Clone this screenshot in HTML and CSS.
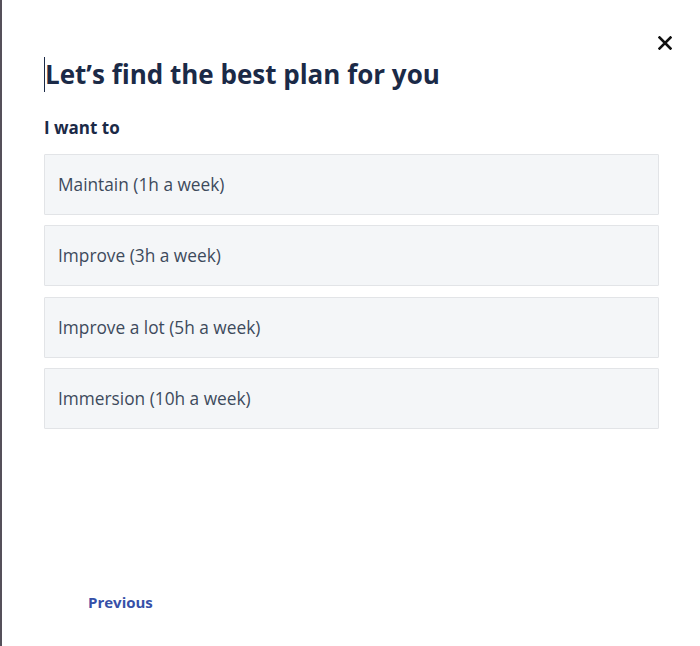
FILE: index.html
```html
<!DOCTYPE html>
<html lang="en">
<head>
  <meta charset="UTF-8" />
  <meta name="viewport" content="width=device-width, initial-scale=1.0" />
  <title>Find a plan</title>
  <link rel="stylesheet" href="styles.css">
</head>
<body>
  <div class="modal">
    <button class="close-btn" aria-label="Close">
      <svg width="14" height="14" viewBox="0 0 14 14">
        <path d="M1.5 1.5 L12.5 12.5 M12.5 1.5 L1.5 12.5" stroke="#111" stroke-width="2.6" stroke-linecap="square" />
      </svg>
    </button>

    <h1 class="title"><span class="caret"></span>Let’s find the best plan for you</h1>

    <div class="question">I want to</div>

    <div class="options">
      <button class="option">Maintain (1h a week)</button>
      <button class="option">Improve (3h a week)</button>
      <button class="option">Improve a lot (5h a week)</button>
      <button class="option">Immersion (10h a week)</button>
    </div>

    <div class="footer">
      <a href="#" class="prev-link">Previous</a>
    </div>
  </div>
</body>
</html>
```

FILE: styles.css
```css
html, body {
  height: 100%;
}

body {
  margin: 0;
  font-family: "Open Sans", "Noto Sans", sans-serif;
  background: #fff;
  border-left: 2px solid #55505a;
  box-sizing: border-box;
}

.modal {
  position: relative;
  box-sizing: border-box;
  height: 646px;
  padding: 55px 41px 0 42px;
  display: flex;
  flex-direction: column;
}

.close-btn {
  position: absolute;
  top: 36px;
  right: 28px;
  width: 14px;
  height: 14px;
  padding: 0;
  border: none;
  background: none;
  cursor: pointer;
  display: flex;
}

.title {
  margin: 0;
  font-size: 26px;
  font-weight: 700;
  color: #1b2a47;
  line-height: 38px;
  display: flex;
  align-items: center;
}

.caret {
  display: inline-block;
  width: 1px;
  height: 35px;
  background: #1b2a47;
}

.question {
  margin-top: 24px;
  font-size: 17px;
  font-weight: 700;
  color: #1b2a47;
  line-height: 22px;
}

.options {
  margin-top: 15px;
  display: flex;
  flex-direction: column;
  gap: 10.33px;
}

.option {
  height: 61px;
  text-align: left;
  padding: 0 13px;
  font-family: inherit;
  font-size: 17.3px;
  color: #3d4a5c;
  background: #f4f6f8;
  border: 1px solid #e2e4e7;
  border-radius: 1px;
  cursor: pointer;
}

.option:hover {
  background: #eceff3;
}

.footer {
  margin-top: auto;
  padding: 0 0 33px 44px;
}

.prev-link {
  font-size: 15px;
  font-weight: 700;
  color: #3650a8;
  text-decoration: none;
}
```
